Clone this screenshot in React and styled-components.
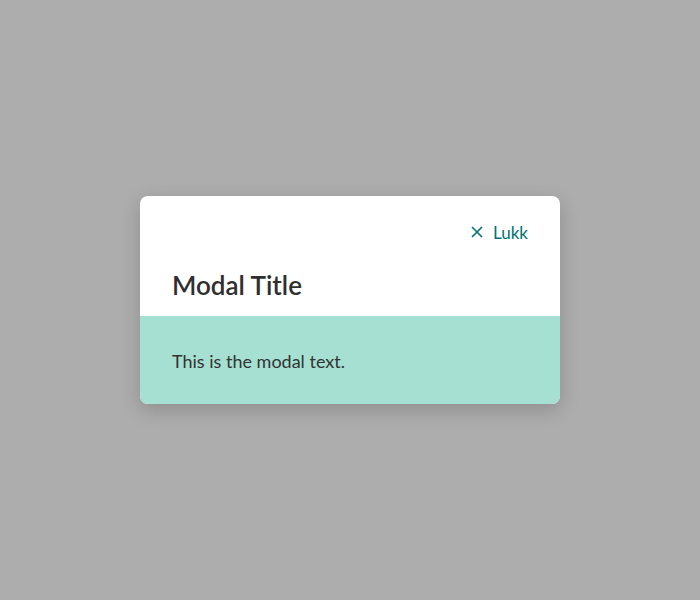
import React from 'react';
import styled, { createGlobalStyle } from 'styled-components';

const GlobalStyle = createGlobalStyle`
  html, body {
    margin: 0;
    padding: 0;
    background: #adadad;
    font-family: Lato, "Open Sans", sans-serif;
  }
`;

const Backdrop = styled.div`
  width: 700px;
  height: 600px;
  display: flex;
  align-items: center;
  justify-content: center;
  background: #adadad;
`;

const Dialog = styled.div`
  width: 420px;
  border-radius: 8px;
  overflow: hidden;
  background: #fff;
  box-shadow: 0 6px 20px rgba(0, 0, 0, 0.18);
`;

const Header = styled.div`
  padding: 24px 32px 15px;
  display: flex;
  flex-direction: column;
`;

const CloseButton = styled.button`
  align-self: flex-end;
  display: flex;
  align-items: center;
  gap: 10px;
  border: none;
  background: none;
  padding: 0;
  height: 24px;
  font-family: Lato, "Open Sans", sans-serif;
  font-size: 17px;
  color: #007272;
  cursor: pointer;
`;

const Title = styled.h2`
  margin: 25px 0 0;
  font-size: 26px;
  line-height: 32px;
  font-weight: 600;
  color: #2f2f2f;
`;

const Body = styled.div`
  background: #a5e0d2;
  padding: 33px 32px 31px;
  font-size: 18px;
  line-height: 24px;
  color: #333;
`;

const App = () => (
  <>
    <GlobalStyle />
    <Backdrop>
      <Dialog>
        <Header>
          <CloseButton>
            <svg width="12" height="12" viewBox="0 0 12 12">
              <path d="M1 1L11 11M11 1L1 11" stroke="#007272" strokeWidth="1.6" />
            </svg>
            Lukk
          </CloseButton>
          <Title>Modal Title</Title>
        </Header>
        <Body>This is the modal text.</Body>
      </Dialog>
    </Backdrop>
  </>
);

export default App;
